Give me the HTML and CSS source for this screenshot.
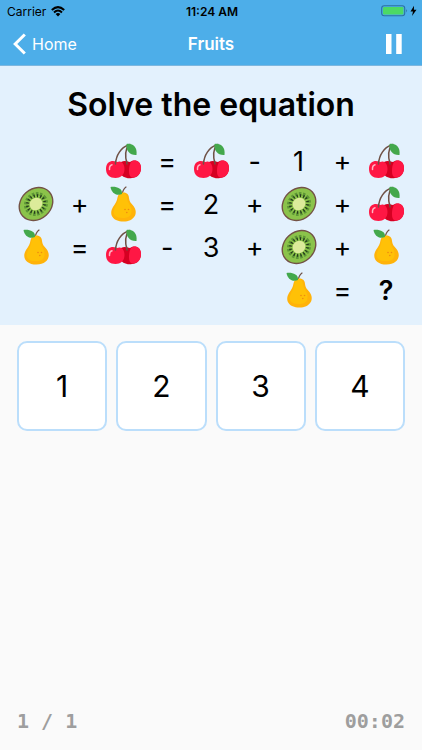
FILE: index.html
```html
<!DOCTYPE html>
<html lang="en">
<head>
    <meta charset="UTF-8">
    <meta name="viewport" content="width=device-width, initial-scale=1.0">
    <title>Fruits</title>
    <link rel="stylesheet" href="styles.css">
</head>
<body>

<!-- fruit pictures -->
<svg class="sprites" aria-hidden="true">
    <symbol id="cherry" viewBox="0 0 36 36">
        <path d="M10.500 21C11 12 16 4.500 23.500 2C20 7 20 14 22 21" fill="none" stroke="#6f5146" stroke-width="1.500" stroke-linecap="round"/>
        <path d="M21.500 1C27 0 32.500 3 31.500 12C25 12.500 20.500 7.500 21.500 1Z" fill="#43a84c"/>
        <path d="M16 19C20 17 23 19 25 19C28 16 36 17 36 25C36 31 32 35 27 35C22 36 16 34 15 29Z" fill="#d50022"/>
        <path d="M26 19C29 16 36 17 36 25C36 31 32 34.500 28 34.500C25 34.500 24 32 24 28C24 23 25 21 26 19Z" fill="#ff1744"/>
        <path d="M1 26C1 20 4.500 18 8 18C10 18 10.500 19 12 19C13.500 19 14 18 16 19C18.500 20 19.500 23 19.500 26C19.500 32 15.500 35 10.500 35C5 35 1 32 1 26Z" fill="#ff1744"/>
        <path d="M4.500 26.500C4.300 24 5.300 22.200 7 21.800" fill="none" stroke="#ffb3c2" stroke-width="1.500" stroke-linecap="round"/>
        <path d="M10.500 21V18.500M22 21L21.600 18" fill="none" stroke="#6f5146" stroke-width="1.500" stroke-linecap="round"/>
    </symbol>
    <symbol id="pear" viewBox="0 0 36 36">
        <path d="M17 9C17.500 5 19 2.500 21 1" fill="none" stroke="#6f5146" stroke-width="1.200" stroke-linecap="round"/>
        <path d="M17.500 6.500C21.500 6 24 8.500 24 12C24.500 16 26 17 28.500 20C34 27.500 29 35.500 18.500 35.500C8 35.500 3.500 28.500 8 21C10.500 17 12 15.500 12.500 11.500C13 8.500 15 6.500 17.500 6.500Z" fill="#ffb30a"/>
        <path d="M17 7C20 7 22 9 22 12C22.500 17 26 19 26.500 24C27 29.500 24 32 17.500 32C11 32 7.500 29 9 24C10.500 19.500 13 17 13.500 12C13.800 9 15 7 17 7Z" fill="#ffc107"/>
        <g fill="#ef8a12">
            <circle cx="20" cy="23.500" r=".8"/>
            <circle cx="23.500" cy="23.500" r=".8"/>
            <circle cx="21.800" cy="26.500" r=".8"/>
        </g>
        <path d="M5.500 1C11 .3 17.500 2 17 8C11.500 10.500 6.500 7 5.500 1Z" fill="#43a84c"/>
    </symbol>
    <symbol id="kiwi" viewBox="0 0 36 36">
        <g transform="rotate(-42 18 18)">
            <ellipse cx="18" cy="18" rx="18.700" ry="15.800" fill="#735246"/>
            <ellipse cx="18" cy="18" rx="17.300" ry="14.400" fill="#8bc34a"/>
            <ellipse cx="18" cy="18" rx="10.700" ry="9.600" fill="none" stroke="#5d9636" stroke-width="3.600" stroke-dasharray="2.400 1.500"/>
            <ellipse cx="18" cy="18" rx="8.800" ry="8" fill="none" stroke="#24391c" stroke-width="3" stroke-dasharray="1.200 2.100"/>
            <ellipse cx="18" cy="18" rx="6.600" ry="6" fill="#dceb9a"/>
        </g>
    </symbol>
</svg>

<div class="app">
    <header class="header">
        <div class="status-bar">
            <div class="carrier">
                <span>Carrier</span>
                <svg width="14" height="11" viewBox="0 0 14 11" aria-hidden="true">
                    <path d="M.8 4Q7-1.800 13.200 4M3 6.400Q7 2.700 11 6.400" fill="none" stroke="#000" stroke-width="2"/>
                    <path d="M4.600 8Q7 5.800 9.400 8L7 10.500Z"/>
                </svg>
            </div>
            <span class="clock">11:24 AM</span>
            <svg class="battery" width="36" height="12" viewBox="0 0 36 12" aria-hidden="true">
                <rect x=".7" y=".7" width="23" height="10" rx="2.500" fill="none" stroke="#2c71a0" stroke-width="1.100"/>
                <rect x="2" y="2" width="20.400" height="7.400" rx="1.200" fill="#4cd964"/>
                <path d="M25.200 4Q27 5.700 25.200 7.400Z" fill="#2c71a0"/>
                <path d="M33 .8L29.500 6.400H32L31 11L35.500 4.800H32.900Z"/>
            </svg>
        </div>
        <nav class="nav-bar">
            <a class="back" href="#">
                <svg width="13" height="22" viewBox="0 0 13 22" aria-hidden="true">
                    <path d="M11.800 1.500L2.200 11L11.800 20.500" fill="none" stroke="#fff" stroke-width="3"/>
                </svg>
                Home
            </a>
            <span class="nav-title">Fruits</span>
            <button class="pause" type="button" aria-label="Pause">
                <svg width="16" height="20" viewBox="0 0 16 20" aria-hidden="true">
                    <path d="M0 0H5.500V20H0ZM10.200 0H15.700V20H10.200Z" fill="#fff"/>
                </svg>
            </button>
        </nav>
    </header>

    <section class="task">
        <h1>Solve the equation</h1>
        <div class="equations">
            <svg class="fruit from-third"><use href="#cherry"/></svg>
            <span>=</span>
            <svg class="fruit"><use href="#cherry"/></svg>
            <span>-</span>
            <span>1</span>
            <span>+</span>
            <svg class="fruit"><use href="#cherry"/></svg>

            <svg class="fruit"><use href="#kiwi"/></svg>
            <span>+</span>
            <svg class="fruit"><use href="#pear"/></svg>
            <span>=</span>
            <span>2</span>
            <span>+</span>
            <svg class="fruit"><use href="#kiwi"/></svg>
            <span>+</span>
            <svg class="fruit"><use href="#cherry"/></svg>

            <svg class="fruit"><use href="#pear"/></svg>
            <span>=</span>
            <svg class="fruit"><use href="#cherry"/></svg>
            <span>-</span>
            <span>3</span>
            <span>+</span>
            <svg class="fruit"><use href="#kiwi"/></svg>
            <span>+</span>
            <svg class="fruit"><use href="#pear"/></svg>

            <svg class="fruit from-seventh"><use href="#pear"/></svg>
            <span>=</span>
            <span class="unknown">?</span>
        </div>
    </section>

    <main class="answers">
        <button type="button">1</button>
        <button type="button">2</button>
        <button type="button">3</button>
        <button type="button">4</button>
    </main>

    <footer class="footer">
        <span>1 / 1</span>
        <span>00:02</span>
    </footer>
</div>

</body>
</html>
```
FILE: styles.css
```css
* {
    box-sizing: border-box;
}
body {
    margin: 0;
    font-family: Inter, "Liberation Sans", sans-serif;
    background-color: #fafafa;
    color: #000;
}
.sprites {
    display: none;
}
.app {
    display: flex;
    flex-direction: column;
    min-height: 100vh;
}

/* header */
.header {
    background-color: #4daee9;
    border-bottom: 1px solid #7db7df;
}
.status-bar, .nav-bar {
    display: grid;
    grid-template-columns: 1fr auto 1fr;
    align-items: center;
}
.status-bar {
    height: 22px;
    padding: 0 5px 0 7px;
    font-size: 12px;
}
.carrier {
    display: flex;
    align-items: center;
    gap: 5px;
}
.clock {
    font-weight: 600;
}
.battery {
    justify-self: end;
}
.nav-bar {
    height: 43px;
    padding: 0 13px;
    color: #fff;
    font-size: 17px;
}
.back {
    display: flex;
    align-items: center;
    gap: 6px;
    color: #fff;
    font-size: 16px;
    text-decoration: none;
}
.nav-title {
    font-weight: 600;
}
.pause {
    display: flex;
    justify-self: end;
    padding: 0 7px;
    border: none;
    background: none;
    cursor: pointer;
}

/* equations */
.task {
    padding: 17px 14px 13px;
    background-color: #e3f1fd;
}
h1 {
    margin: 0 0 13px;
    font-size: 32px;
    line-height: 44px;
    font-weight: 600;
    text-align: center;
}
.equations {
    display: grid;
    grid-template-columns: repeat(9, 1fr);
    grid-auto-rows: 43px;
    place-items: center;
    font-size: 27px;
}
.fruit {
    width: 36px;
    height: 36px;
    margin-bottom: 2px;
    overflow: visible;
}
.from-third {
    grid-column: 3;
}
.from-seventh {
    grid-column: 7;
}
.unknown {
    font-weight: 600;
}

/* answers */
.answers {
    display: grid;
    grid-template-columns: repeat(4, 1fr);
    gap: 9px;
    padding: 16px 17px;
}
.answers button {
    aspect-ratio: 1;
    padding: 0;
    border: 2px solid #bbdefb;
    border-radius: 10px;
    background-color: #fff;
    color: #000;
    font-family: inherit;
    font-size: 30px;
    cursor: pointer;
}

/* footer */
.footer {
    display: flex;
    justify-content: space-between;
    margin-top: auto;
    padding: 0 17px 17px;
    color: #9e9e9e;
    font-family: "DejaVu Sans Mono", monospace;
    font-size: 20px;
    line-height: 24px;
    font-weight: 700;
}
```
